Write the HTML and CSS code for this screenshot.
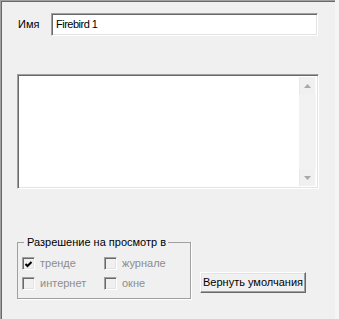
FILE: index.html
```html
<!DOCTYPE html>
<html lang="ru">
<head>
<meta charset="utf-8">
<link rel="stylesheet" href="styles.css">
</head>
<body>
<div class="panel">
  <div class="name-row">
    <span class="label">Имя</span>
    <div class="input sunken">Firebird 1</div>
  </div>
  <div class="memo sunken">
    <div class="memo-text"></div>
    <div class="vscroll">
      <div class="arrow">
        <svg width="7" height="4" viewBox="0 0 7 4"><polygon points="3.5,0 7,4 0,4" fill="#a9a9a9"/></svg>
      </div>
      <div class="track"></div>
      <div class="arrow">
        <svg width="7" height="4" viewBox="0 0 7 4"><polygon points="0,0 7,0 3.5,4" fill="#a9a9a9"/></svg>
      </div>
    </div>
  </div>
  <div class="bottom-row">
    <div class="group">
      <span class="legend">Разрешение на просмотр в</span>
      <div class="checks">
        <label class="check">
          <span class="box sunken">
            <svg width="9" height="9" viewBox="0 0 9 9"><polyline points="1.5,4 3.5,6 7.5,2" fill="none" stroke="#000" stroke-width="2"/></svg>
          </span>
          <span>тренде</span>
        </label>
        <label class="check"><span class="box sunken"></span><span>журнале</span></label>
        <label class="check"><span class="box sunken"></span><span>интернет</span></label>
        <label class="check"><span class="box sunken"></span><span>окне</span></label>
      </div>
    </div>
    <button class="btn">Вернуть умолчания</button>
  </div>
</div>
</body>
</html>
```

FILE: styles.css
```css
html, body {
  margin: 0;
  padding: 0;
  background: #f5f5f5;
  overflow: hidden;
}
body {
  width: 339px;
  height: 319px;
  font-family: "Liberation Sans", Arial, sans-serif;
  font-size: 11px;
  line-height: 13px;
  color: #000;
}
.panel {
  width: 335px;
  height: 319px;
  box-sizing: border-box;
  background: #f0f0f0;
  border-top: 1px solid #a0a0a0;
  border-left: 1px solid #a0a0a0;
  box-shadow: inset 1px 1px 0 #696969;
  padding: 12px 0 0 16px;
}
.sunken {
  box-sizing: border-box;
  border-top: 1px solid #a0a0a0;
  border-left: 1px solid #a0a0a0;
  border-right: 1px solid #fff;
  border-bottom: 1px solid #fff;
  box-shadow: inset 1px 1px 0 #696969, inset -1px -1px 0 #e3e3e3;
}
.name-row {
  display: flex;
  align-items: center;
  height: 23px;
}
.label {
  width: 34px;
  padding-left: 1px;
  box-sizing: border-box;
}
.input {
  width: 267px;
  height: 23px;
  background: #fff;
  padding: 4px 0 0 4px;
  letter-spacing: -0.5px;
}
.memo {
  margin-top: 38px;
  width: 302px;
  height: 115px;
  background: #fff;
  display: flex;
  padding: 2px;
}
.memo-text {
  flex: 1;
}
.vscroll {
  width: 17px;
  background: #f0f0f0;
  display: flex;
  flex-direction: column;
  box-shadow: inset 1px 0 0 #e8e8e8, inset -1px 0 0 #fbfbfb;
}
.arrow {
  height: 17px;
  display: flex;
  align-items: center;
  justify-content: center;
}
.track {
  flex: 1;
  background: #f2f2f2;
}
.bottom-row {
  margin-top: 53px;
  display: flex;
  align-items: flex-end;
}
.group {
  width: 174px;
  height: 57px;
  box-sizing: border-box;
  border: 1px solid #a0a0a0;
  box-shadow: 1px 1px 0 #fff;
  padding: 0 0 0 4px;
}
.legend {
  display: block;
  width: fit-content;
  margin: -7px 0 0 2px;
  padding: 0 2px 0 3px;
  background: #f0f0f0;
}
.checks {
  margin-top: 8px;
  display: grid;
  grid-template-columns: 82px auto;
  row-gap: 7px;
}
.check {
  display: flex;
  align-items: center;
  gap: 5px;
  color: #8d8d8d;
}
.box {
  width: 13px;
  height: 13px;
  background: #f0f0f0;
  display: flex;
  align-items: center;
  justify-content: center;
}
.box svg {
  display: block;
  margin: 1px 0 0 0;
}
.btn {
  margin: 0 0 6px 9px;
  width: 106px;
  height: 21px;
  padding: 0 0 1px 0;
  font-family: "Liberation Sans", Arial, sans-serif;
  font-size: 11px;
  color: #000;
  background: #f0f0f0;
  border-top: 1px solid #fff;
  border-left: 1px solid #fff;
  border-right: 1px solid #696969;
  border-bottom: 1px solid #696969;
  box-shadow: inset -1px -1px 0 #a0a0a0, inset 1px 1px 0 #e3e3e3;
  border-radius: 0;
}
```
